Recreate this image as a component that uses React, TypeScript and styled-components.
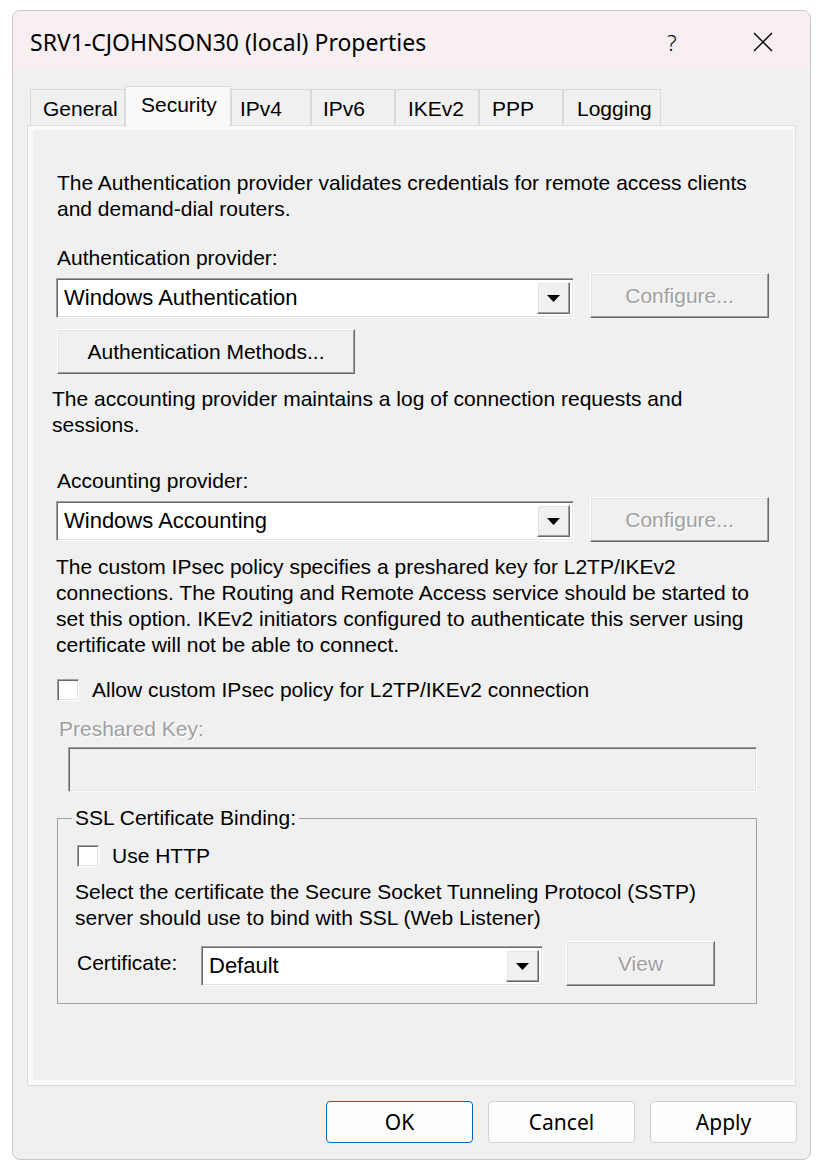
import React from 'react'
import styled, { createGlobalStyle, css } from 'styled-components'

const GlobalStyle = createGlobalStyle`
  html, body {
    margin: 0;
    padding: 0;
    background: #ffffff;
  }
  * {
    box-sizing: border-box;
  }
`

const classicFont = `"Liberation Sans", Arial, sans-serif`
const modernFont = `"Noto Sans", "Open Sans", sans-serif`

const StyledWindow = styled.div`
  margin: 10px 0 0 12px;
  width: 799px;
  height: 1150px;
  border: 1px solid #c6c6c6;
  border-radius: 8px;
  background: #f0f0f0;
  overflow: hidden;
  display: flex;
  flex-direction: column;
  font-family: ${classicFont};
  font-size: 21px;
  color: #000;
`

const StyledTitleBar = styled.div`
  height: 59px;
  flex-shrink: 0;
  background: #f7eff1;
  display: flex;
  align-items: center;
  padding-left: 17px;
  font-family: ${modernFont};
`

const StyledTitle = styled.div`
  flex: 1;
  font-size: 23px;
  padding-top: 3px;
  white-space: nowrap;
`

const StyledCaptionButton = styled.div<{ $w: number }>`
  width: ${(p) => p.$w}px;
  height: 59px;
  display: flex;
  align-items: center;
  justify-content: center;
  font-size: 22px;
  font-weight: 300;
  padding-top: 2px;
`

const StyledBody = styled.div`
  flex: 1;
  display: flex;
  flex-direction: column;
  padding: 16px 14px 0;
  min-height: 0;
`

const StyledTabRow = styled.div`
  display: flex;
  align-items: flex-end;
  height: 41px;
  margin: 0 0 -2px 3px;
  position: relative;
  z-index: 1;
`

const StyledTab = styled.div<{ $w: number; $pad: number; $selected?: boolean }>`
  width: ${(p) => p.$w}px;
  border: 1px solid #dadada;
  border-bottom: none;
  white-space: nowrap;
  line-height: 26px;
  padding-left: ${(p) => p.$pad}px;
  ${(p) =>
    p.$selected
      ? css`
          height: 41px;
          background: #f9f9f9;
          padding-top: 5px;
        `
      : css`
          height: 36px;
          margin-bottom: 2px;
          background: #f0f0f0;
          padding-top: 6px;
          border-left-color: transparent;
          & + & {
            border-left-color: #dadada;
          }
        `}
  &:first-child {
    border-left-color: #dadada;
  }
`

const StyledPanel = styled.div`
  flex: 1;
  border: 1px solid #dcdcdc;
  background: #f9f9f9;
  padding: 4px 5px 5px;
  display: flex;
  min-height: 0;
`

const StyledPage = styled.div`
  flex: 1;
  background: #f0f0f0;
  padding: 40px 24px 0;
  display: flex;
  flex-direction: column;
  align-items: flex-start;
`

const StyledText = styled.div<{ $mt?: number; $ml?: number; $disabled?: boolean }>`
  line-height: 26px;
  white-space: nowrap;
  margin-top: ${(p) => p.$mt ?? 0}px;
  margin-left: ${(p) => p.$ml ?? 0}px;
  ${(p) =>
    p.$disabled &&
    css`
      color: #a0a0a0;
      text-shadow: 1px 1px 0 #ffffff;
    `}
`

const StyledRow = styled.div<{ $mt?: number }>`
  display: flex;
  align-items: flex-start;
  margin-top: ${(p) => p.$mt ?? 0}px;
`

const sunken = css`
  border: 1px solid;
  border-color: #a0a0a0 #ffffff #ffffff #a0a0a0;
  box-shadow: inset 1px 1px 0 #696969, inset -1px -1px 0 #e3e3e3;
`

const raised = css`
  border: 1px solid;
  border-color: #ffffff #696969 #696969 #ffffff;
  box-shadow: inset -1px -1px 0 #a0a0a0, inset 1px 1px 0 #e3e3e3;
`

const StyledCombo = styled.div<{ $w: number; $mt: number; $ml?: number }>`
  ${sunken}
  width: ${(p) => p.$w}px;
  height: 40px;
  margin-top: ${(p) => p.$mt}px;
  margin-left: ${(p) => p.$ml ?? 0}px;
  background: #ffffff;
  display: flex;
  align-items: center;
  padding: 3px 3px 3px 7px;
`

const StyledComboValue = styled.div`
  flex: 1;
  font-size: 22px;
  line-height: 26px;
  white-space: nowrap;
`

const StyledComboButton = styled.div`
  ${raised}
  width: 33px;
  height: 100%;
  background: #f0f0f0;
  display: flex;
  align-items: center;
  justify-content: center;
`

const StyledButton = styled.div<{ $w: number; $mt?: number; $ml?: number; $disabled?: boolean }>`
  ${raised}
  width: ${(p) => p.$w}px;
  height: 45px;
  margin-top: ${(p) => p.$mt ?? 0}px;
  margin-left: ${(p) => p.$ml ?? 0}px;
  background: #f0f0f0;
  display: flex;
  align-items: center;
  justify-content: center;
  white-space: nowrap;
  ${(p) =>
    p.$disabled &&
    css`
      color: #a0a0a0;
      text-shadow: 1px 1px 0 #ffffff;
    `}
`

const StyledCheckRow = styled.div<{ $mt: number }>`
  display: flex;
  align-items: center;
  height: 26px;
  margin-top: ${(p) => p.$mt}px;
`

const StyledCheckbox = styled.div<{ $ml?: number }>`
  ${sunken}
  width: 22px;
  height: 22px;
  background: #ffffff;
  margin: 0 13px 0 ${(p) => p.$ml ?? 0}px;
`

const StyledTextBox = styled.div<{ $w: number; $mt: number; $ml: number }>`
  ${sunken}
  width: ${(p) => p.$w}px;
  height: 45px;
  margin-top: ${(p) => p.$mt}px;
  margin-left: ${(p) => p.$ml}px;
  background: #f0f0f0;
`

const StyledGroup = styled.fieldset<{ $mt: number }>`
  margin: ${(p) => p.$mt}px 0 0 0;
  width: 700px;
  border: 1px solid #a0a0a0;
  padding: 0 0 17px 18px;
  min-width: 0;
`

const StyledLegend = styled.legend`
  padding: 0 3px;
  margin-left: -4px;
  line-height: 26px;
`

const StyledLabel = styled.div`
  width: 125px;
  line-height: 26px;
  padding: 9px 0 0 1px;
`

const StyledFooter = styled.div`
  display: flex;
  justify-content: flex-end;
  gap: 15px;
  padding: 15px 13px 16px;
  flex-shrink: 0;
`

const StyledDialogButton = styled.div<{ $primary?: boolean }>`
  width: 147px;
  height: 42px;
  border: 1px solid ${(p) => (p.$primary ? '#0067c0' : '#d2d2d2')};
  border-radius: 4px;
  background: #fdfdfd;
  font-family: ${modernFont};
  font-size: 21px;
  display: flex;
  align-items: center;
  justify-content: center;
  padding-bottom: 1px;
`

const DropArrow = () => (
  <svg width="13" height="7" viewBox="0 0 13 7">
    <polygon points="0,0 13,0 6.5,7" fill="#000" />
  </svg>
)

const CloseIcon = () => (
  <svg width="20" height="20" viewBox="0 0 20 20">
    <path d="M1 1 L19 19 M19 1 L1 19" stroke="#000" strokeWidth="1.4" fill="none" />
  </svg>
)

const Combo = ({ value, w, mt, ml }: { value: string; w: number; mt: number; ml?: number }) => (
  <StyledCombo $w={w} $mt={mt} $ml={ml}>
    <StyledComboValue>{value}</StyledComboValue>
    <StyledComboButton>
      <DropArrow />
    </StyledComboButton>
  </StyledCombo>
)

const tabs = [
  { label: 'General', w: 95, pad: 12 },
  { label: 'Security', w: 106, pad: 15, selected: true },
  { label: 'IPv4', w: 80, pad: 8 },
  { label: 'IPv6', w: 84, pad: 11 },
  { label: 'IKEv2', w: 84, pad: 12 },
  { label: 'PPP', w: 84, pad: 12 },
  { label: 'Logging', w: 98, pad: 13 },
]

const App = () => {
  return (
    <>
      <GlobalStyle />
      <StyledWindow>
        <StyledTitleBar>
          <StyledTitle>SRV1-CJOHNSON30 (local) Properties</StyledTitle>
          <StyledCaptionButton $w={88}>?</StyledCaptionButton>
          <StyledCaptionButton $w={94}>
            <CloseIcon />
          </StyledCaptionButton>
        </StyledTitleBar>

        <StyledBody>
          <StyledTabRow>
            {tabs.map((tab) => (
              <StyledTab key={tab.label} $w={tab.w} $pad={tab.pad} $selected={tab.selected}>
                {tab.label}
              </StyledTab>
            ))}
          </StyledTabRow>

          <StyledPanel>
            <StyledPage>
              <StyledText>
                The Authentication provider validates credentials for remote access clients
                <br />
                and demand-dial routers.
              </StyledText>

              <StyledText $mt={23}>Authentication provider:</StyledText>
              <StyledRow $mt={2}>
                <Combo value="Windows Authentication" w={518} mt={5} ml={-1} />
                <StyledButton $w={179} $ml={16} $disabled>
                  Configure...
                </StyledButton>
              </StyledRow>
              <StyledButton $w={298} $mt={11}>
                Authentication Methods...
              </StyledButton>

              <StyledText $mt={12} $ml={-5}>
                The accounting provider maintains a log of connection requests and
                <br />
                sessions.
              </StyledText>

              <StyledText $mt={30}>Accounting provider:</StyledText>
              <StyledRow $mt={3}>
                <Combo value="Windows Accounting" w={518} mt={4} ml={-1} />
                <StyledButton $w={179} $ml={16} $disabled>
                  Configure...
                </StyledButton>
              </StyledRow>

              <StyledText $mt={12} $ml={-1}>
                The custom IPsec policy specifies a preshared key for L2TP/IKEv2
                <br />
                connections. The Routing and Remote Access service should be started to
                <br />
                set this option. IKEv2 initiators configured to authenticate this server using
                <br />
                certificate will not be able to connect.
              </StyledText>

              <StyledCheckRow $mt={19}>
                <StyledCheckbox />
                Allow custom IPsec policy for L2TP/IKEv2 connection
              </StyledCheckRow>

              <StyledText $mt={13} $ml={2} $disabled>
                Preshared Key:
              </StyledText>
              <StyledTextBox $w={689} $mt={5} $ml={11} />

              <StyledGroup $mt={13}>
                <StyledLegend>SSL Certificate Binding:</StyledLegend>
                <StyledCheckRow $mt={12}>
                  <StyledCheckbox $ml={1} />
                  Use HTTP
                </StyledCheckRow>
                <StyledText $mt={10} $ml={-1}>
                  Select the certificate the Secure Socket Tunneling Protocol (SSTP)
                  <br />
                  server should use to bind with SSL (Web Listener)
                </StyledText>
                <StyledRow $mt={10}>
                  <StyledLabel>Certificate:</StyledLabel>
                  <Combo value="Default" w={342} mt={5} />
                  <StyledButton $w={149} $ml={23} $disabled>
                    View
                  </StyledButton>
                </StyledRow>
              </StyledGroup>
            </StyledPage>
          </StyledPanel>
        </StyledBody>

        <StyledFooter>
          <StyledDialogButton $primary>OK</StyledDialogButton>
          <StyledDialogButton>Cancel</StyledDialogButton>
          <StyledDialogButton>Apply</StyledDialogButton>
        </StyledFooter>
      </StyledWindow>
    </>
  )
}

export default App
